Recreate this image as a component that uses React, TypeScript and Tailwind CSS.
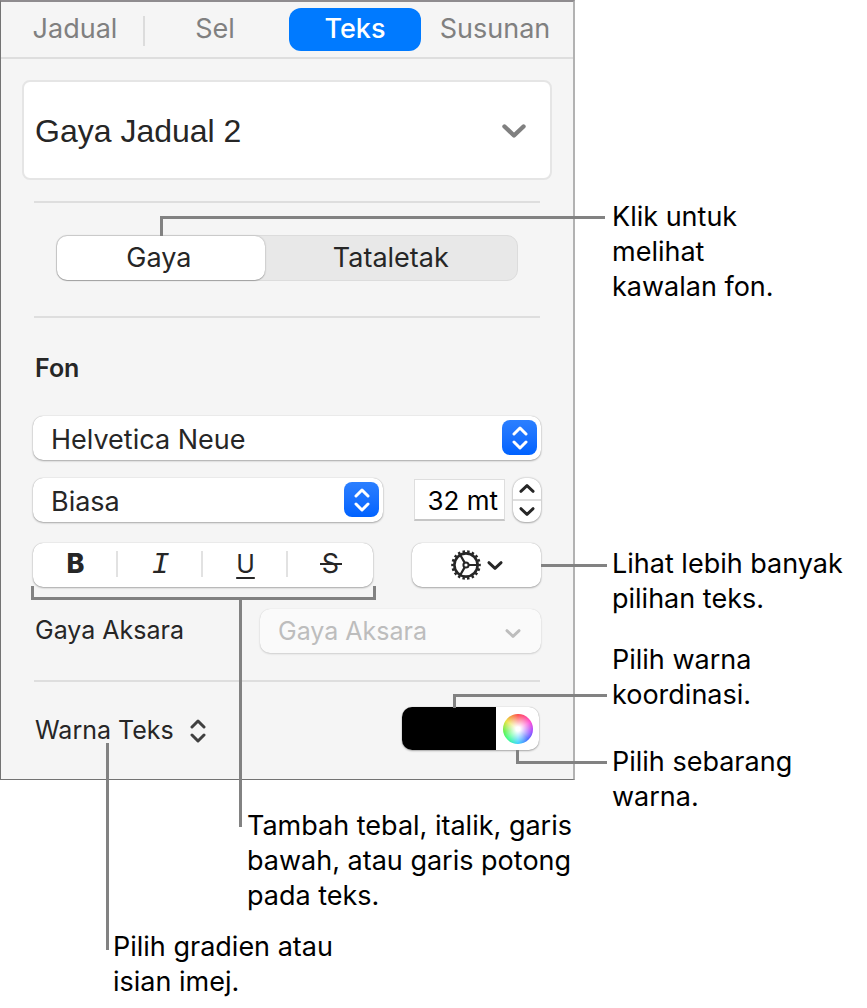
import type { ReactNode } from "react";

const LINE = "absolute border-[#828282] pointer-events-none";
const CONTROL = "rounded-[10px] bg-white shadow-[0_0_1px_rgba(0,0,0,0.3),0_1px_2px_rgba(0,0,0,0.3)]";

const Chevron = ({ className }: { className: string }) => (
  <svg viewBox="0 0 24 14" className={className} fill="none" stroke="currentColor" strokeLinecap="round" strokeLinejoin="round" aria-hidden="true">
    <path d="M2.5 2.5 12 11.5 21.5 2.5" strokeWidth="4.4" />
  </svg>
);

const UpDown = ({ className }: { className: string }) => (
  <svg viewBox="0 0 16 24" className={className} fill="none" stroke="currentColor" strokeWidth="3" strokeLinecap="round" strokeLinejoin="round" aria-hidden="true">
    <path d="M2 8 8 2l6 6M2 16l6 6 6-6" />
  </svg>
);

const Gear = () => (
  <svg viewBox="-15 -15 30 30" className="size-[30px]" fill="none" stroke="currentColor" aria-hidden="true">
    <circle r="11.6" strokeWidth="2.6" />
    <circle r="13.5" strokeWidth="2.6" pathLength="72" strokeDasharray="2.1 1.9" strokeDashoffset="1" />
    <circle r="2.6" strokeWidth="2" />
    <path d="M3 0H11M-1.5 -2.6-5.6 -9.8M-1.5 2.6-5.6 9.8" strokeWidth="2.2" />
  </svg>
);

type PopupProps = { label: string; value: string; className?: string };

const Popup = ({ label, value, className = "" }: PopupProps) => (
  <div className={`relative h-11 ${CONTROL} ${className}`}>
    <select aria-label={label} className="h-full w-full appearance-none rounded-[10px] bg-transparent pl-[18px] pr-12 pt-1 text-[27px] text-[#262626]">
      <option>{value}</option>
    </select>
    <span className="pointer-events-none absolute right-1 top-1 flex size-[35px] items-center justify-center rounded-lg bg-linear-to-b from-[#2b7fff] to-[#0062ff] text-white">
      <UpDown className="h-6 w-4" />
    </span>
  </div>
);

const Divider = () => <hr className="mx-[33px] border-t-2 border-[#dedede]" />;

const Note = ({ children, className = "" }: { children: ReactNode; className?: string }) => (
  <p className={`whitespace-nowrap text-[27px] leading-[35px] text-black ${className}`}>{children}</p>
);

const Tabs = () => (
  <nav className="grid h-[57px] grid-cols-4 items-center border-b-2 border-[#dedede] pl-1 pr-2 text-[27px] text-[#808080]">
    <button className="relative h-[43px]">
      Jadual
      <span className="absolute right-0 top-2 h-[30px] w-[2px] bg-[#dcdcdc]" />
    </button>
    <button className="h-[43px]">Sel</button>
    <button className="mx-1 h-[43px] rounded-xl bg-[#007aff] font-medium text-white">Teks</button>
    <button className="h-[43px]">Susunan</button>
  </nav>
);

const FormatBar = () => (
  <div className={`relative grid h-11 w-[340px] grid-cols-4 ${CONTROL}`}>
    <button aria-label="Tebal" className="relative pb-[2px] text-[27px] font-extrabold">
      B
      <span className="absolute right-0 top-2 h-[26px] w-[2px] bg-[#e2e2e2]" />
    </button>
    <button aria-label="Italik" className="relative font-['Liberation_Mono',monospace] text-[30px] italic">
      I
      <span className="absolute right-0 top-2 h-[26px] w-[2px] bg-[#e2e2e2]" />
    </button>
    <button aria-label="Garis bawah" className="relative pb-[2px] text-[25px] underline decoration-2 underline-offset-4">
      U
      <span className="absolute right-0 top-2 h-[26px] w-[2px] bg-[#e2e2e2]" />
    </button>
    <button aria-label="Garis potong" className="relative flex items-center justify-center pb-[2px] text-[27px]">
      S
      <span className="absolute top-5 h-[2px] w-[22px] bg-[#262626]" />
    </button>
    {/* kurungan di bawah butang gaya */}
    <span className={`${LINE} -left-[2px] -right-[3px] top-[43px] h-[14px] border-x-[3px] border-b-[3px]`} />
    <span className={`${LINE} left-[206px] top-[56px] z-10 h-[228px] border-l-[3px]`} />
  </div>
);

const Panel = () => (
  <section className="border-b border-l border-r-2 border-t-2 border-[#737373] border-r-[#b2b2b2] border-t-[#8f8c8f] bg-[#f5f5f5] text-[#262626]">
    <Tabs />
    <button className="mx-[21px] mt-[21px] flex h-[100px] w-[calc(100%-42px)] items-center justify-between rounded-lg border-2 border-[#e5e5e5] bg-white pl-[11px] pr-6 pt-[2px] font-['Liberation_Sans',Arial,sans-serif] text-[32px]">
      Gaya Jadual 2
      <Chevron className="h-[14px] w-6 text-[#808080]" />
    </button>

    <div className="mt-[21px]">
      <Divider />
    </div>
    <div className="relative mx-[55px] mt-8 grid h-[46px] grid-cols-[209fr_254fr] rounded-[11px] border border-[#dcdcdc] bg-[#e8e8e8] text-[27px]">
      <button className="rounded-[10px] bg-white pr-1 shadow-[0_0_2px_rgba(0,0,0,0.3),0_1px_1px_rgba(0,0,0,0.2)]">Gaya</button>
      <button>Tataletak</button>
      <span className={`${LINE} -right-[88px] -top-5 left-[103px] h-5 border-l-[3px] border-t-[3px]`} />
    </div>
    <div className="mt-[35px]">
      <Divider />
    </div>

    <div className="mt-8 px-8">
      <h2 className="pl-[2px] text-[25px] font-semibold leading-9">Fon</h2>
      <Popup label="Fon" value="Helvetica Neue" className="mt-[30px]" />
      <div className="mt-[18px] flex items-center">
        <Popup label="Muka taip" value="Biasa" className="w-[350px]" />
        <input aria-label="Saiz" defaultValue="32 mt" className="ml-auto mr-2 h-[42px] w-[91px] border border-b-2 border-[#dedede] border-b-[#c6c6c6] bg-white pr-1.5 pt-[2px] text-right text-[26px] text-black" />
        <div className="flex h-11 w-7 flex-col divide-y-2 divide-[#dedede] rounded-xl bg-white shadow-[0_0_2px_rgba(0,0,0,0.3),0_1px_2px_rgba(0,0,0,0.25)]">
          <button aria-label="Naik" className="flex flex-1 items-center justify-center">
            <Chevron className="h-[9px] w-4 rotate-180" />
          </button>
          <button aria-label="Turun" className="flex flex-1 items-center justify-center">
            <Chevron className="h-[9px] w-4" />
          </button>
        </div>
      </div>
      <div className="mt-[21px] flex items-center justify-between">
        <FormatBar />
        <button aria-label="Pilihan lanjutan" className={`relative flex h-11 w-[129px] items-center justify-center gap-[6px] ${CONTROL}`}>
          <Gear />
          <Chevron className="h-[9px] w-4" />
          <span className={`${LINE} -right-[66px] top-[21px] w-[66px] border-t-[3px]`} />
        </button>
      </div>
      <div className="mt-[22px] flex items-center justify-between">
        <label htmlFor="aksara" className="pl-[2px] text-[25px]">Gaya Aksara</label>
        <div className="relative h-11 w-[281px] rounded-[10px] bg-[#fafafa] shadow-[0_0_1px_rgba(0,0,0,0.15),0_1px_2px_rgba(0,0,0,0.15)]">
          <select id="aksara" disabled className="h-full w-full appearance-none bg-transparent pl-[18px] pt-[2px] text-[25px] text-[#bdbdbd] opacity-100">
            <option>Gaya Aksara</option>
          </select>
          <Chevron className="pointer-events-none absolute right-5 top-5 h-[9px] w-4 text-[#bdbdbd]" />
        </div>
      </div>
    </div>

    <div className="mt-[27px]">
      <Divider />
    </div>
    <div className="mb-[29px] mt-[25px] flex items-center justify-between px-[34px]">
      <button className="relative flex items-center gap-4 pt-1 text-[25px]">
        Warna Teks
        <UpDown className="h-6 w-4 text-[#404040]" />
        <span className={`${LINE} left-[71px] top-[35px] z-10 h-[207px] border-l-[3px]`} />
      </button>
      <div className={`relative flex h-[43px] w-[137px] ${CONTROL}`}>
        <button aria-label="Warna koordinasi" className="flex-1 rounded-l-[10px] bg-black" />
        <button aria-label="Sebarang warna" className="flex w-[43px] items-center justify-center">
          <span className="size-[30px] rounded-full bg-[radial-gradient(circle,#ffffff_10%,rgba(255,255,255,0)_72%),conic-gradient(#ff4040,#ff40d0_60deg,#9a40ff_100deg,#4060ff_135deg,#30d0ff_180deg,#30ff80_225deg,#55f040_260deg,#e8e030_305deg,#ff4040)]" />
        </button>
        <span className={`${LINE} -right-[68px] -top-[13px] left-[51px] h-[14px] border-l-[3px] border-t-[3px]`} />
        <span className={`${LINE} -right-[68px] left-[114px] top-[43px] h-[14px] border-b-[3px] border-l-[3px]`} />
      </div>
    </div>
  </section>
);

export default function App() {
  return (
    <main className="flex min-h-screen items-start bg-white font-[Inter,sans-serif]">
      <div className="min-w-0 flex-1">
        <Panel />
        <Note className="ml-[247px] mt-7">
          Tambah tebal, italik, garis
          <br />
          bawah, atau garis potong
          <br />
          pada teks.
        </Note>
        <Note className="ml-[113px] mt-4">
          Pilih gradien atau
          <br />
          isian imej.
        </Note>
      </div>
      <aside className="w-[292px] shrink-0 pl-[37px] pt-[199px]">
        <Note>
          Klik untuk
          <br />
          melihat
          <br />
          kawalan fon.
        </Note>
        <Note className="mt-[242px]">
          Lihat lebih banyak
          <br />
          pilihan teks.
        </Note>
        <Note className="mt-[26px]">
          Pilih warna
          <br />
          koordinasi.
        </Note>
        <Note className="mt-8">
          Pilih sebarang
          <br />
          warna.
        </Note>
      </aside>
    </main>
  );
}
